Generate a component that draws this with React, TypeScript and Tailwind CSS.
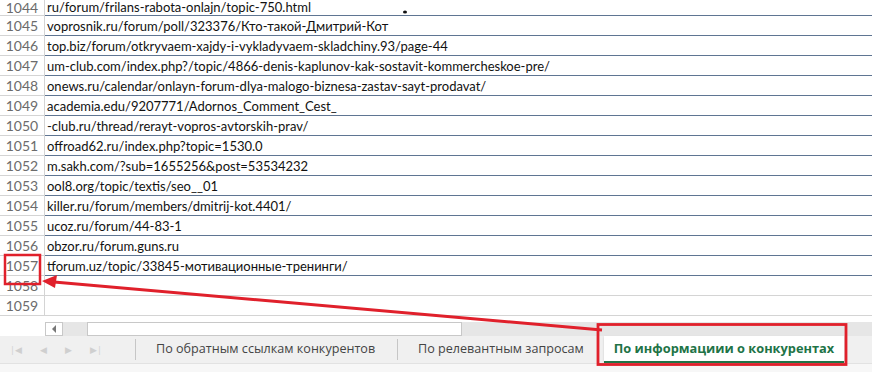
import React from "react";

const rows: [number, string][] = [
  [1044, "ru/forum/frilans-rabota-onlajn/topic-750.html"],
  [1045, "voprosnik.ru/forum/poll/323376/Кто-такой-Дмитрий-Кот"],
  [1046, "top.biz/forum/otkryvaem-xajdy-i-vykladyvaem-skladchiny.93/page-44"],
  [1047, "um-club.com/index.php?/topic/4866-denis-kaplunov-kak-sostavit-kommercheskoe-pre/"],
  [1048, "onews.ru/calendar/onlayn-forum-dlya-malogo-biznesa-zastav-sayt-prodavat/"],
  [1049, "academia.edu/9207771/Adornos_Comment_Cest_"],
  [1050, "-club.ru/thread/rerayt-vopros-avtorskih-prav/"],
  [1051, "offroad62.ru/index.php?topic=1530.0"],
  [1052, "m.sakh.com/?sub=1655256&post=53534232"],
  [1053, "ool8.org/topic/textis/seo__01"],
  [1054, "killer.ru/forum/members/dmitrij-kot.4401/"],
  [1055, "ucoz.ru/forum/44-83-1"],
  [1056, "obzor.ru/forum.guns.ru"],
  [1057, "tforum.uz/topic/33845-мотивационные-тренинги/"],
];

function Row({ n, text, blue, first }: { n: number; text?: string; blue: boolean; first?: boolean }) {
  return (
    <div className={"flex " + (first ? "h-[16px]" : "h-[20px]")}>
      <div
        className={
          "w-[45px] shrink-0 border-r border-b border-[#d4d4d4] text-[#6b6b6b] text-[14px] text-center " +
          (first ? "leading-[15px]" : "pt-[1px] leading-[18px]")
        }
      >
        {n}
      </div>
      <div
        className={
          "flex-1 border-b text-[13px] text-[#111] pl-[2px] whitespace-nowrap overflow-hidden " +
          (first ? "leading-[15px] " : "pt-[1px] leading-[18px] ") +
          (blue ? "border-[#5f7592]" : "border-[#d4d4d4]")
        }
      >
        {text}
      </div>
    </div>
  );
}

export default function App() {
  return (
    <div
      className="relative w-[872px] h-[372px] overflow-hidden bg-white"
      style={{ fontFamily: "Lato, 'Open Sans', sans-serif" }}
    >
      <div>
        {rows.map(([n, t], i) => (
          <Row key={n} n={n} text={t} blue first={i === 0} />
        ))}
        <Row n={1058} blue={false} />
        <Row n={1059} blue={false} />
      </div>

      {/* horizontal scrollbar */}
      <div className="flex h-[14px] mt-[6px] pl-[45px]">
        <div className="w-[18px] border border-[#c8c8c8] bg-white flex items-center justify-center">
          <div className="w-0 h-0 border-y-[4px] border-y-transparent border-r-[4px] border-r-[#777]" />
        </div>
        <div className="w-[24px] bg-[#e6e6e6]" />
        <div className="w-[375px] border border-[#c8c8c8] bg-white" />
        <div className="flex-1 bg-[#e6e6e6]" />
      </div>

      {/* sheet tabs */}
      <div
        className="flex h-[27px] bg-[#f0f0f0] items-stretch"
        style={{ fontFamily: "'Open Sans', sans-serif" }}
      >
        <div className="w-[135px] flex items-center text-[#cfcfcf] text-[9px] pl-[10px] gap-[18px]">
          <span>|◀</span>
          <span>◀</span>
          <span>▶</span>
          <span>▶|</span>
        </div>
        <div className="border-l border-[#c6c6c6] my-[3px]" />
        <div className="w-[261px] flex items-center pl-[20px] text-[12.6px] text-[#444]">
          По обратным ссылкам конкурентов
        </div>
        <div className="border-l border-[#c6c6c6] my-[3px]" />
        <div className="w-[206px] flex items-center pl-[20px] text-[12.6px] text-[#444]">
          По релевантным запросам
        </div>
        <div className="w-[240px] bg-white border-b-[2px] border-[#217346] flex items-center justify-center text-[12.8px] font-bold text-[#217346] shadow-[0_1px_2px_rgba(0,0,0,0.15)]">
          По информациии о конкурентах
        </div>
      </div>
      <div className="h-[9px] bg-[#f7f7f7] border-t border-[#e2e2e2]" />

      {/* annotations */}
      <svg className="absolute left-0 top-0" width="872" height="372" viewBox="0 0 872 372">
        <ellipse cx="405" cy="12" rx="2" ry="1.6" fill="#111" />
        <rect x="5" y="255" width="35" height="29" fill="none" stroke="#e0202b" strokeWidth="2.5" />
        <rect x="598" y="324.5" width="248" height="40" fill="none" stroke="#e0202b" strokeWidth="2.8" />
        <line x1="602" y1="330" x2="54" y2="282" stroke="#e0202b" strokeWidth="3" />
        <polygon points="42,281 57,275 55,288" fill="#e0202b" />
      </svg>
    </div>
  );
}
